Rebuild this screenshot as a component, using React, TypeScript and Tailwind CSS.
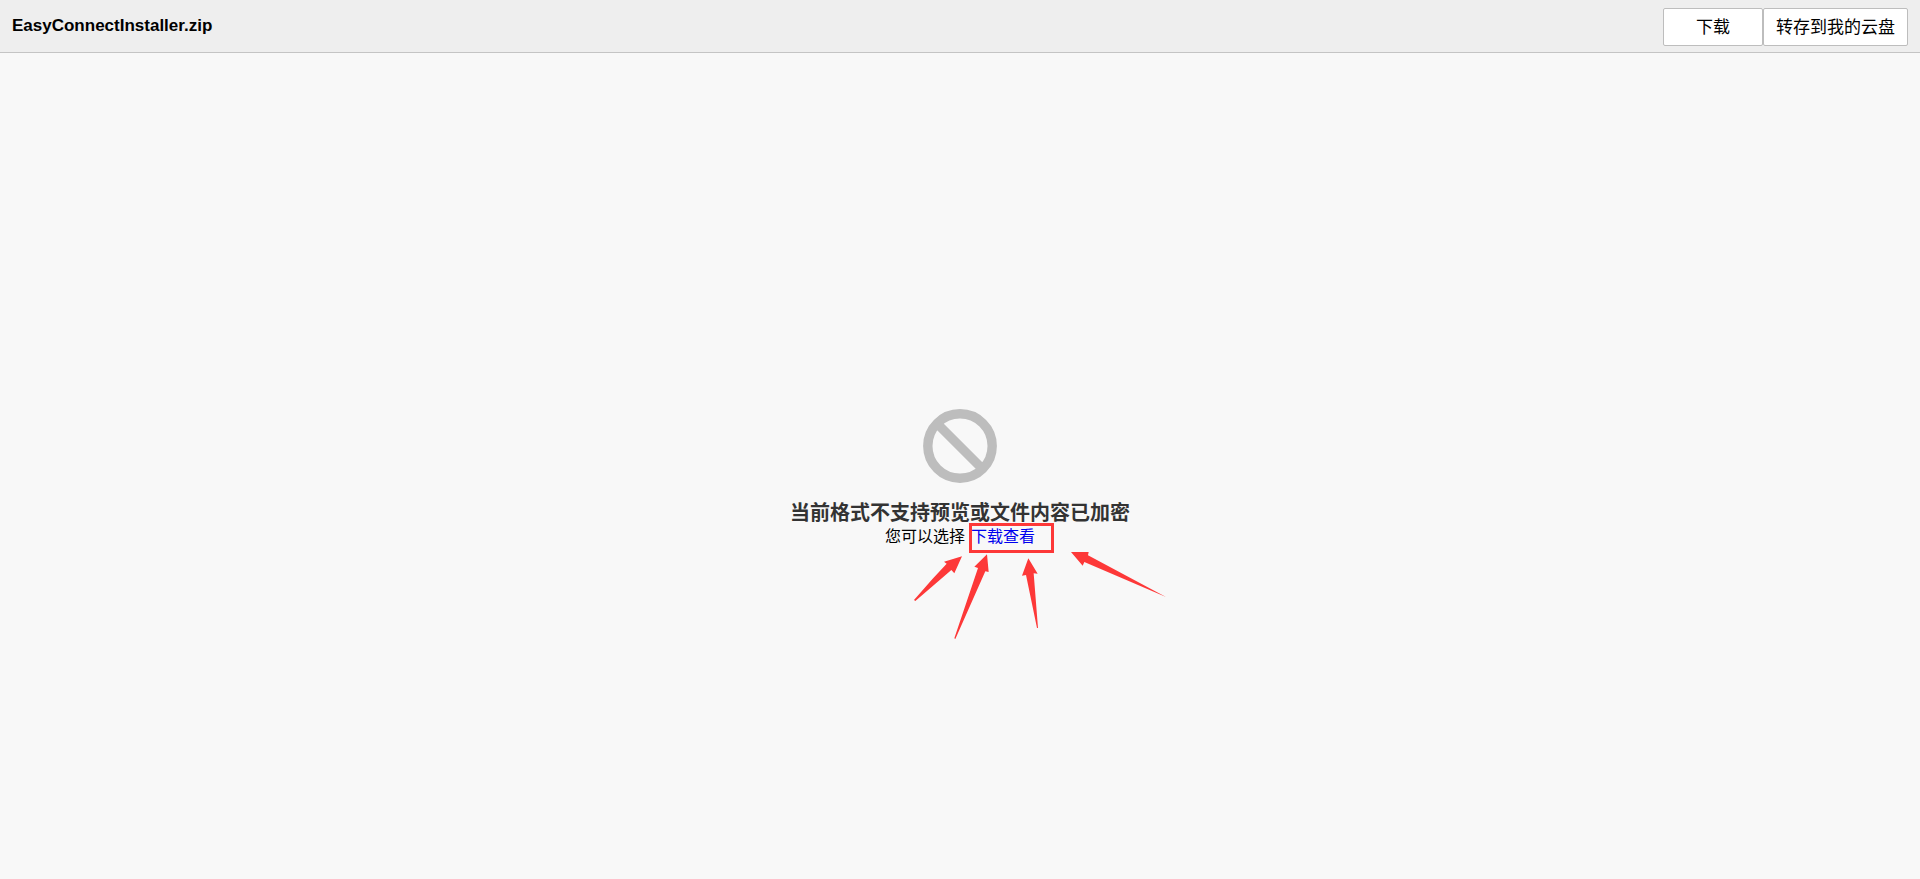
const buttonClass =
  "h-[38px] rounded-xs border border-[#bdbdbd] bg-white px-3 pt-[2px] text-[17px] leading-6 text-black";

function ForbiddenIcon() {
  return (
    <svg className="h-[74px] w-[74px]" viewBox="0 0 74 74" fill="none" stroke="#bdbdbd" aria-hidden="true">
      <circle cx="37" cy="37" r="32.2" strokeWidth="9.4" />
      <path d="M15 15.5 58.5 59" strokeWidth="9.4" />
    </svg>
  );
}

/* Red frame and arrows that point out the download link. */
function LinkCallout() {
  return (
    <svg
      className="pointer-events-none absolute -top-[14px] -left-[71px] h-[140px] w-[280px] max-w-none"
      viewBox="0 0 840 420"
      fill="#fd3838"
      aria-hidden="true"
    >
      <rect x="211.5" y="40.5" width="246" height="81" fill="none" stroke="#fd3838" strokeWidth="9" />
      <path d="M186 136 132 152 140 158 98 203 42 267 46 270 108 217 154 177 163 187Z" />
      <path d="M261 130 223 167 234 171 163 382 166 384 256 181 266 183Z" />
      <path d="M385 142 366 194 378 192 411 351 414 351 401 187 413 188Z" />
      <path d="M513 123 566 123 564 133 798 258 553 153 548 164Z" />
    </svg>
  );
}

export default function App() {
  return (
    <div className="flex min-h-screen flex-col bg-[#f8f8f8] font-['Liberation_Sans','Noto_Sans_CJK_SC',sans-serif] text-black">
      <header className="flex items-center justify-between border-b border-[#c4c4c4] bg-[#eeeeee] px-3 pt-2 pb-[6px]">
        <h1 className="pb-[2px] text-[17px] leading-6 font-bold">EasyConnectInstaller.zip</h1>
        <div className="flex">
          <button type="button" className={`${buttonClass} w-[100px]`}>
            下载
          </button>
          <button type="button" className={buttonClass}>
            转存到我的云盘
          </button>
        </div>
      </header>
      <main className="flex flex-1 flex-col items-center justify-center pt-[26px]">
        <ForbiddenIcon />
        <h2 className="mt-[18px] text-xl leading-6 font-bold text-[#333333]">
          当前格式不支持预览或文件内容已加密
        </h2>
        <p className="flex gap-[6px] text-base leading-6">
          <span>您可以选择</span>
          <a href="#download" className="relative text-[#0000ee]">
            下载查看
            <LinkCallout />
          </a>
        </p>
      </main>
    </div>
  );
}
